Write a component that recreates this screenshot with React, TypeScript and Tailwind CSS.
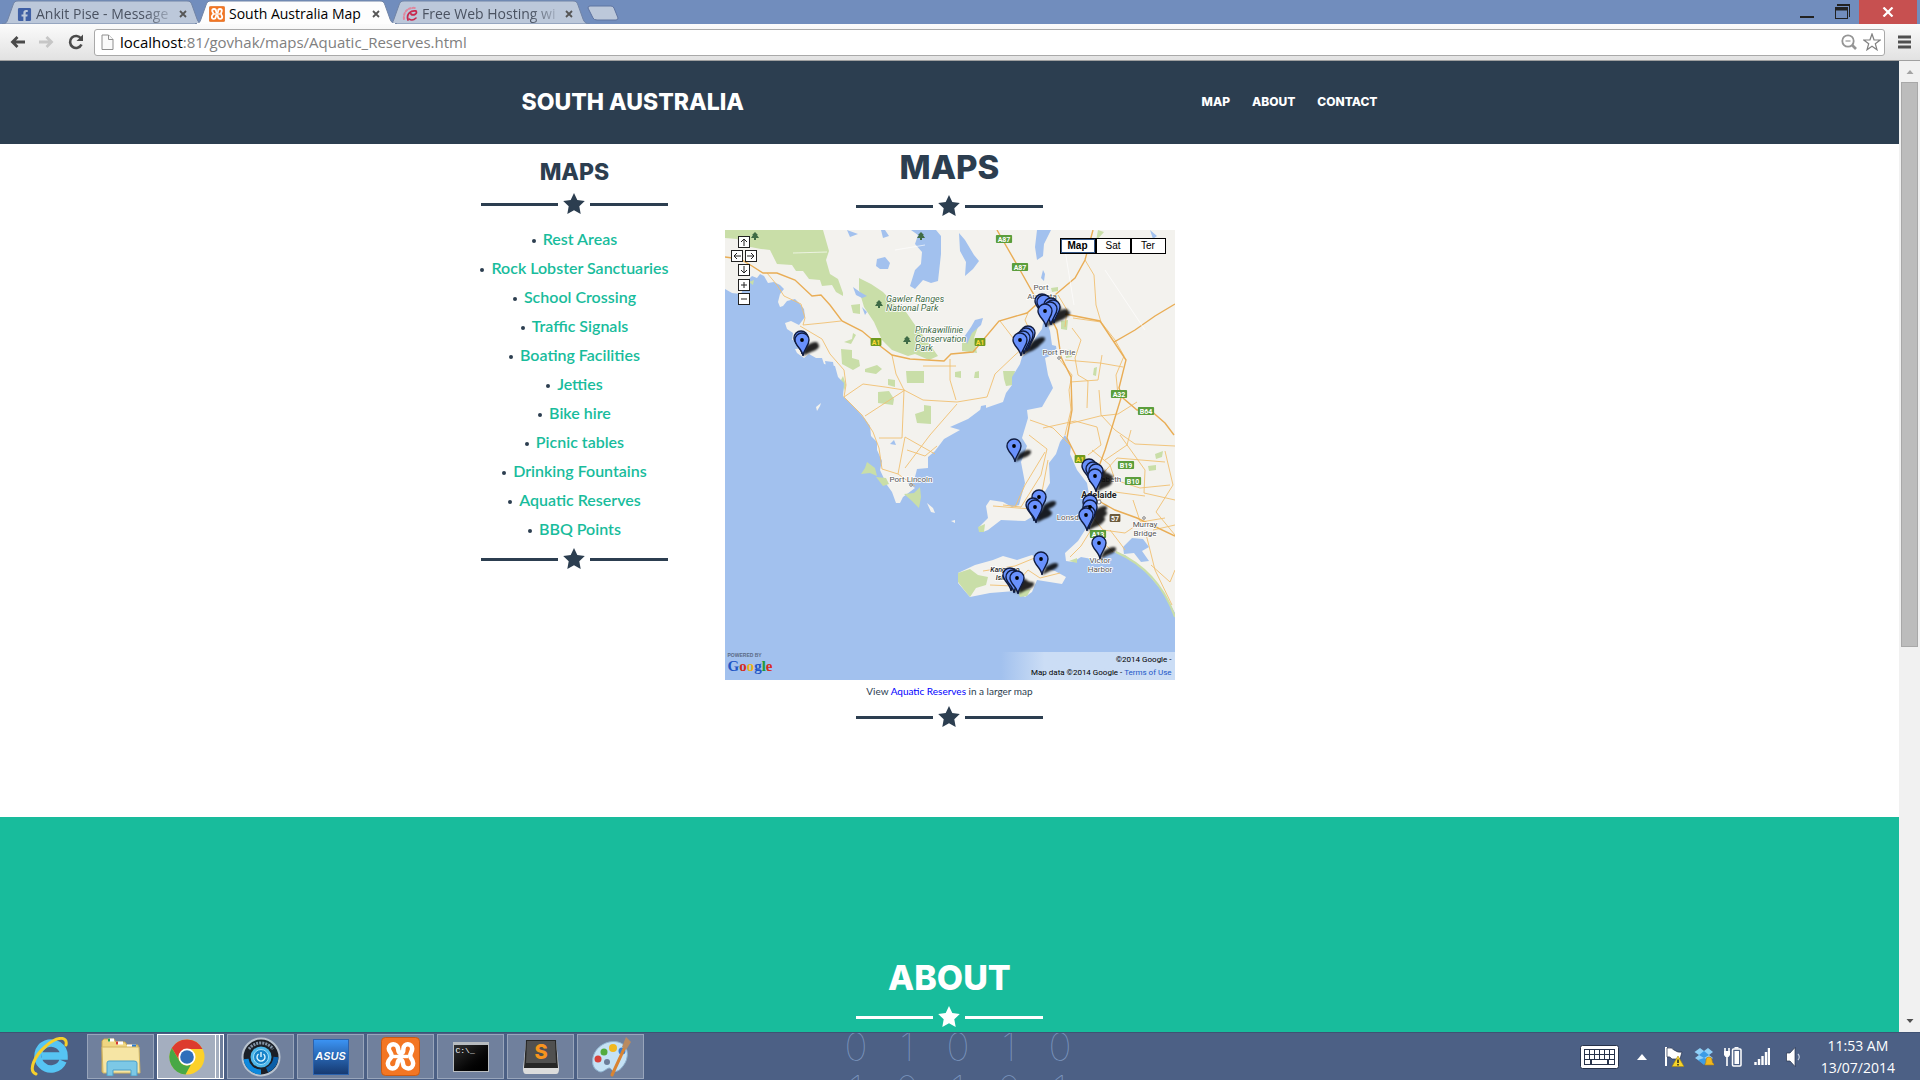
import React from "react";
import { FaFacebookSquare } from "react-icons/fa";

const UI = "font-['Open_Sans','Noto_Sans',sans-serif]";
const HEAD = "font-['Inter',sans-serif] font-extrabold";

const mapLinks = [
  "Rest Areas",
  "Rock Lobster Sanctuaries",
  "School Crossing",
  "Traffic Signals",
  "Boating Facilities",
  "Jetties",
  "Bike hire",
  "Picnic tables",
  "Drinking Fountains",
  "Aquatic Reserves",
  "BBQ Points",
];

function XamppIcon({ size }: { size: number }) {
  return (
    <svg width={size} height={size} viewBox="0 0 40 40">
      <rect x="0.5" y="0.5" width="39" height="39" rx="4" fill="#f37623" stroke="#c85a14" />
      <path
        d="M8 12 C8 6 17 6 17.500 12 C18 18 23 18 23 12 C23 6 32 6 32 12 C32 15 30 16 30 19.500 C30 22 33 23 33 27 C33 34 23 34 22.500 27 C22 22 17.500 22 17 27 C16.500 34 7 34 7 27 C7 23 11 22 11 19.500 C11 16 8 15 8 12 Z"
        fill="none"
        stroke="#fff"
        strokeWidth="4.600"
        strokeLinejoin="round"
      />
      <path d="M12 20 H28" stroke="#fff" strokeWidth="3.500" />
    </svg>
  );
}

function SwirlIcon() {
  return (
    <svg width="16" height="16" viewBox="0 0 16 16" fill="none" strokeLinecap="round">
      <path d="M2 13 C1 6 6 1 13 2" stroke="#e0869d" strokeWidth="2" strokeDasharray="2 2" />
      <path d="M6 14 C4 8 9 4 14 5 C16 8 11 10 9 8" stroke="#c8284f" strokeWidth="1.800" />
      <path d="M7 13 C10 15 12 14 14 12" stroke="#c8284f" strokeWidth="1.600" />
    </svg>
  );
}

type TabProps = { icon: React.ReactNode; title: string; active?: boolean };

function Tab({ icon, title, active }: TabProps) {
  return (
    <div className={active ? "relative z-10 h-6 w-[193px]" : "relative h-6 w-[193px]"}>
      <svg className="absolute inset-y-0 -left-1 h-6 w-[202px]" viewBox="0 0 202 24" aria-hidden="true">
        <path
          d="M0 24 C4 24 5 22 6 19 L11 5 C12 2 13 1 16 1 H185 C188 1 189 2 190 5 L195 19 C196 22 198 24 202 24 Z"
          fill={active ? "#fdfdfd" : "#bcc8da"}
          stroke="#7184a6"
          strokeWidth="1"
        />
        {active && <path d="M2 24 H200" stroke="#fdfdfd" strokeWidth="2" />}
      </svg>
      <div className="relative flex h-full items-center gap-1 pt-1 pl-2.5 pr-2">
        <span className="flex w-4 shrink-0 justify-center">{icon}</span>
        <span
          className={
            active
              ? "flex-1 whitespace-nowrap text-sm leading-5 text-black"
              : "flex-1 whitespace-nowrap text-sm leading-5 text-[#4a5261] [mask-image:linear-gradient(to_right,black_80%,transparent_105%)]"
          }
        >
          {title}
        </span>
        <button aria-label={"Close " + title} className="flex h-4 w-4 items-center justify-center">
          <svg width="8" height="8" viewBox="0 0 8 8">
            <path d="M1 1 L7 7 M7 1 L1 7" stroke="#555" strokeWidth="1.800" />
          </svg>
        </button>
      </div>
    </div>
  );
}

function BrowserChrome() {
  return (
    <header className={UI}>
      <div className="flex h-6 justify-between bg-[#718dbd]">
        <div className="flex pl-1.5">
          <Tab icon={<FaFacebookSquare size={15} color="#4060a5" />} title="Ankit Pise - Message" />
          <Tab icon={<XamppIcon size={16} />} title="South Australia Map" active />
          <Tab icon={<SwirlIcon />} title="Free Web Hosting wi" />
          <button aria-label="New tab" className="ml-0.5">
            <svg width="32" height="24" viewBox="0 0 32 24">
              <path d="M3 6 H24 Q26 6 27 8 L31 18 Q31 20 29 20 H10 Q7 20 6 18 L1 8 Q1 6 3 6 Z" fill="#bcc8da" stroke="#5f74a0" />
            </svg>
          </button>
        </div>
        <div className="flex pr-[3px]">
          <button aria-label="Minimise" className="flex w-9 justify-center">
            <svg width="14" height="24" viewBox="0 0 14 24">
              <path d="M0 17 H14" stroke="#222" strokeWidth="2" />
            </svg>
          </button>
          <button aria-label="Restore" className="flex w-[34px] justify-center">
            <svg width="15" height="24" viewBox="0 0 15 24" fill="none" stroke="#222">
              <path d="M2 4.500 H14.500 V17" />
              <path d="M2 5 H15" strokeWidth="2" />
              <rect x="0.500" y="7.500" width="12" height="11" />
              <path d="M0 9 H13" strokeWidth="3" />
            </svg>
          </button>
          <button aria-label="Close window" className="flex w-[58px] items-center justify-center bg-[#c75050]">
            <svg width="12" height="10" viewBox="0 0 12 10">
              <path d="M1.500 0.500 L10.500 9.500 M10.500 0.500 L1.500 9.500" stroke="#fff" strokeWidth="2.200" />
            </svg>
          </button>
        </div>
      </div>
      <div className="flex h-[37px] items-center border-b border-[#a0a0a0] bg-gradient-to-b from-[#fbfbfb] to-[#e2e2e2] pl-2.5 pr-[9px]">
        <button aria-label="Back" className="w-7">
          <svg width="16" height="12" viewBox="0 0 16 12" fill="none" stroke="#4a4a4a" strokeWidth="2.800">
            <path d="M15 6 H3 M7.500 1 L2.500 6 L7.500 11" />
          </svg>
        </button>
        <button aria-label="Forward" className="w-[30px]">
          <svg width="16" height="12" viewBox="0 0 16 12" fill="none" stroke="#c6c6c6" strokeWidth="2.800">
            <path d="M1 6 H13 M8.500 1 L13.500 6 L8.500 11" />
          </svg>
        </button>
        <button aria-label="Reload" className="w-[26px]">
          <svg width="16" height="16" viewBox="0 0 16 16">
            <path d="M13 4.500 A6 6 0 1 0 13.500 10.500" fill="none" stroke="#4a4a4a" strokeWidth="2.600" />
            <path d="M15 0.500 V7 H8.500 Z" fill="#4a4a4a" />
          </svg>
        </button>
        <div className="flex h-[27px] flex-1 items-center rounded-[3px] border border-[#a9a9a9] bg-white px-1.5">
          <svg width="13" height="17" viewBox="0 0 13 17" fill="#fafafa" stroke="#8e8e8e">
            <path d="M1 1 H7.500 L12 5.500 V15.500 H1 Z" />
            <path d="M7.500 1 V5.500 H12" />
          </svg>
          <a href="#page" className="ml-1.5 flex-1 text-[15px] leading-5 text-[#808080]">
            <span className="text-black">localhost</span>:81/govhak/maps/Aquatic_Reserves.html
          </a>
          <button aria-label="Zoom" className="mr-1.5">
            <svg width="16" height="16" viewBox="0 0 16 16" fill="none" stroke="#959595">
              <circle cx="7" cy="7" r="5.700" strokeWidth="1.800" />
              <path d="M11 11 L15 15" strokeWidth="2.600" />
              <path d="M4.500 7 H9.500" strokeWidth="1.200" />
            </svg>
          </button>
          <button aria-label="Bookmark" className="-mr-[3px]">
            <svg width="18" height="18" viewBox="0 0 18 18">
              <path d="M9 1 L11 6.800 L17.200 7 L12.300 10.700 L14 16.800 L9 13.300 L4 16.800 L5.700 10.700 L0.800 7 L7 6.800 Z" fill="#fff" stroke="#808080" strokeWidth="1.200" />
            </svg>
          </button>
        </div>
        <button aria-label="Menu" className="ml-[13px]">
          <svg width="13" height="14" viewBox="0 0 13 14" stroke="#505050" strokeWidth="3">
            <path d="M0 2 H13 M0 7 H13 M0 12 H13" />
          </svg>
        </button>
      </div>
    </header>
  );
}

function StarDivider({ light }: { light?: boolean }) {
  return (
    <div className={light ? "flex w-[187px] items-center justify-between text-white" : "flex w-[187px] items-center justify-between text-[#2c3e50]"}>
      <span className="h-[3px] w-[77px] bg-current" />
      <svg width="22" height="22" viewBox="0 0 22 22" fill="currentColor">
        <path d="M11 0 L14.300 7 L21.800 8 L16.300 13.300 L17.700 21 L11 17.300 L4.300 21 L5.700 13.300 L0.200 8 L7.700 7 Z" />
      </svg>
      <span className="h-[3px] w-[78px] bg-current" />
    </div>
  );
}

const pins: [number, number][] = [
  [76, 108], [77, 110],
  [317, 71], [319, 72], [326, 75], [328, 77], [325, 79], [320, 81],
  [303, 103], [301, 105], [298, 108], [295, 110],
  [289, 216],
  [364, 236], [368, 239], [371, 241], [370, 246],
  [314, 267], [308, 275], [310, 277],
  [365, 272], [365, 277], [363, 283], [361, 285],
  [374, 313],
  [316, 329],
  [285, 345], [288, 347], [292, 348],
];

const frontPins: [number, number][] = [
  [77, 110], [320, 81], [295, 110], [289, 216], [370, 246], [314, 267], [310, 277], [365, 277], [361, 285], [374, 313], [316, 329], [292, 348],
];

const shields: { x: number; y: number; t: string; c: string }[] = [
  { x: 279, y: 9, t: "A87", c: "#5b9e3c" },
  { x: 295, y: 37, t: "A87", c: "#5b9e3c" },
  { x: 394, y: 164, t: "A32", c: "#5b9e3c" },
  { x: 421, y: 181, t: "B64", c: "#5b9e3c" },
  { x: 401, y: 235, t: "B19", c: "#5b9e3c" },
  { x: 408, y: 251, t: "B10", c: "#5b9e3c" },
  { x: 373, y: 304, t: "A13", c: "#5b9e3c" },
  { x: 151, y: 112, t: "A1", c: "#6f9a1e" },
  { x: 255, y: 112, t: "A1", c: "#6f9a1e" },
  { x: 355, y: 229, t: "A1", c: "#6f9a1e" },
  { x: 390, y: 288, t: "57", c: "#6c5a3c" },
];

const trees: [number, number][] = [[30, 6], [196, 6], [154, 74], [182, 110]];

function MapDrawing() {
  return (
    <svg className="block h-auto w-full" viewBox="0 0 450 450" fontFamily="Roboto, sans-serif">
      <defs>
        <filter id="soft" x="-30%" y="-30%" width="160%" height="160%">
          <feGaussianBlur stdDeviation="1" />
        </filter>
      </defs>
      <rect width="450" height="450" fill="#f3f2ee" />

      <g fill="#c9dea8">
        <path d="M0 0 H98 L104 21 L101 30 L105 44 L113 49 L118 63 V66 L111 62 L107 55 L97 56 L95 50 L84 49 L78 41 H71 L67 35 L52 34 L45 20 L36 19 L20 16 L12 9 L0 8 Z" />
        <path d="M134 48 L146 54 L158 62 L170 75 L181 82 L190 95 L200 108 L213 126 L204 130 L190 124 L183 126 L167 120 L157 110 L149 92 L139 77 L134 60 Z" />
        <path d="M126 75 L135 74 V84 L128 83 Z M116 119 L127 120 V128 L134 130 L135 136 L128 140 L117 134 Z M140 139 L152 135 L157 139 L151 144 L140 142 Z" />
        <path d="M181 141 H199 V153 H182 Z M153 162 L164 161 L169 169 L168 175 L153 173 Z M163 149 L170 150 V157 L163 155 Z M190 184 L199 181 V175 L206 176 V194 L192 193 Z M230 142 L236 141 V148 L230 147 Z" />
        <path d="M118 146 L121 155 L119 161 L116 150 Z M119 112 L127 109 L128 103 L131 105 L126 114 Z" />
        <path d="M237 110 L247 100 L253 97 L249 108 L252 123 L237 121 Z M278 141 L290 141 L288 155 L281 156 L279 149 Z M250 142 L254 141 V148 L249 148 Z M336 91 L343 90 L342 100 L336 99 Z M326 58 L333 57 V61 L327 62 Z" />
        <path d="M369 138 L372 137 L371 146 L368 145 Z M340 121 L346 119 L347 127 L341 128 Z M430 224 L438 221 L437 227 L431 229 Z M423 236 L431 235 V240 L424 241 Z" />
        <path d="M373 0 L379 2 L371 11 Z" />
      </g>

      <path
        fill="#a2c1ee"
        d="M0 59 L7 63 L16 64 L19 57 L23 50 L27 46 L32 48 L35 44 L39 46 L43 53 L49 52 L55 55 L59 59 L55 64 L53 72 L55 77 L58 76 L62 71 L70 69 L74 73 L79 79 L80 87 L74 95 L66 91 L60 93 L62 99 L68 103 L67 110 L74 111 L79 118 L70 119 L72 123 L79 128 L84 124 L91 128 L97 128 L99 134 L110 136 L113 147 L119 153 L118 166 L125 173 L130 178 L140 189 L145 196 L146 206 L152 212 L152 220 L157 231 L155 240 L162 255 L167 262 L171 273 L175 273 L178 267 L190 258 L183 253 L190 247 L192 239 L203 238 V227 L210 221 L219 209 L235 200 L225 197 L243 189 L255 180 L278 172 L281 163 L287 155 L287 147 L295 134 L297 127 L305 120 L311 107 L317 99 L318 93 L322 92 L325 101 L327 115 L331 116 L332 123 L320 128 L323 145 L328 158 L321 170 L317 177 L302 180 L303 188 L297 208 L302 216 L296 232 L300 253 L294 275 L287 277 L278 272 L265 270 L261 276 L263 288 L254 297 L258 302 L263 300 L276 290 L300 291 L310 285 L315 270 L325 253 L324 233 L331 224 L335 212 L340 205 L346 216 L345 224 L352 240 L362 253 L365 270 L362 297 L353 311 L340 323 L341 331 L348 332 L356 327 L372 330 L388 322 L400 325 L422 343 L439 363 L450 383 V450 H0 Z"
      />
      <g fill="#a2c1ee">
        <path d="M186 0 L193 5 L190 14 L197 22 L196 34 L190 40 L185 56 L190 59 L198 50 L206 53 L213 51 L216 24 L216 6 L211 0 Z" />
        <path d="M152 29 L160 27 L165 33 L163 39 L155 39 L151 36 Z M128 57 L135 62 L142 66 L137 68 L131 65 Z M122 0 L133 4 L125 7 Z M234 3 L240 10 L249 25 L254 31 L248 39 L240 46 L241 32 L235 21 Z" />
        <path d="M312 0 H326 L319 14 L318 26 L312 30 L310 17 Z M318 40 L320 44 L319 51 L316 48 Z M250 90 L258 88 L256 95 L247 103 L242 114 L239 107 L246 97 Z" />
        <path d="M398 317 L407 308 L418 309 L424 317 L417 321 L424 331 L416 332 L409 323 L399 324 Z M100 131 L108 132 L109 138 L101 136 Z M256 176 L261 175 V180 L255 181 Z" />
        <path d="M137 77 L142 82 L140 85 Z M156 0 H160 L164 6 L158 8 Z M425 0 L432 6 L428 9 Z M165 214 L169 210 L171 215 Z" />
      </g>
      <path
        fill="#f3f2ee"
        d="M233 343 L250 335 L268 330 L278 326 L292 330 L307 325 L314 329 L316 337 L330 341 L341 347 L337 354 L312 350 L307 362 L300 367 L290 361 L265 363 L245 367 L233 353 Z M92 181 L95 176 L96 173 L91 177 Z M202 273 L208 278 L210 283 L206 282 Z M226 291 L230 290 V293 Z"
      />
      <path
        fill="#c9dea8"
        d="M233 343 L245 339 L253 345 L263 347 L261 355 L251 358 L245 367 L240 361 L233 352 Z M292 360 L306 359 L302 366 L295 367 Z M142 232 L150 238 L152 246 L145 243 L136 244 L140 238 Z M151 247 L161 248 L164 254 L158 256 Z M179 264 L189 263 L195 257 L196 267 L194 278 L187 271 Z M253 297 L260 294 L259 302 L254 302 Z M24 52 L29 50 L28 55 Z M344 331 L352 328 L352 333 Z"
      />
      <path d="M391 322 Q434 341 450 387" fill="none" stroke="#c9dea8" strokeWidth="2" />

      <g fill="none" stroke="#f0c070" strokeWidth="0.900">
        <path d="M42 43 L52 55 L59 66 L76 74 L80 88 L78 95 L98 93 L116 91 M75 96 L97 109 L105 124 L119 140 L121 155 L119 167 L137 185 L148 202 L154 218 L157 239 L173 244 L180 207 L210 224" />
        <path d="M167 125 L171 144 L179 160 L198 170 L232 172 L262 167 L270 144 L290 125 L298 118 M119 167 L138 154 L160 157 L179 160 L177 208 L154 208 M198 136 L231 136 M225 129 V150 L231 170 M180 160 L140 186 M173 244 L190 256 M232 174 L205 205 L180 238 M182 220 L200 226 L212 216" />
        <path d="M275 91 L295 117 M303 83 L300 90 L308 108 M333 65 L342 80 L340 97 M360 30 L369 45 L371 75 L376 92 L390 110 L399 126 L391 145 L393 165 M335 130 L347 145 L344 160 L346 180 L340 205 M347 98 L356 110 L350 128 L353 145 L363 151 L362 178 M340 130 L375 133 L398 137 M348 88 L376 92 M343 194 L375 186 L393 184 L412 172 M305 190 L328 198 L345 215 M318 198 L350 191 L372 197 L376 215 L363 225 M345 152 L373 150 L377 125 M374 160 L376 185 L390 200 L410 214 L450 216 M406 200 L402 215 L380 230" />
        <path d="M304 205 L322 219 L316 245 L296 277 L278 275 M320 222 L300 255 L290 277 M323 230 L317 262 L308 279 L293 278 L268 276 M367 220 L385 235 L390 250 L415 258 L445 255 M395 205 L420 240 L419 263 L450 270 M372 250 L392 228 L440 232 M440 221 L448 255 L431 282 L450 305 M374 270 L390 262 L420 266 M365 284 L378 300 L400 303 L416 292 L440 288 M416 294 L408 270 M366 300 L356 316 L345 327 M370 305 L388 322 M385 300 L395 313 L400 320 M420 300 L430 340 L447 375 M428 300 L450 295 M426 335 L445 352 L450 340 M258 341 L290 336 L312 327 M290 355 L303 340 L315 348 L335 343 M265 355 L288 356" />
      </g>
      <g fill="none" stroke="#e9ad55" strokeWidth="1.400">
        <path d="M0 27 L15 29 L27 36 L38 43 L52 43 L70 50 L87 66 L96 65 L105 75 L117 91 L137 101 L150 112 L167 125 L185 129 L219 131 L226 124 L248 122 L274 91 L302 83 L312 74" />
        <path d="M272 0 L295 40 L313 72 L324 84 L332 100 L336 127 L346 147 L347 180 L342 208 L352 228 M318 72 L330 65 L350 48 L360 30 L368 0 M340 84 L375 91 L389 112 L410 100 L430 86 L450 74 M389 112 L401 130 L394 158 L398 168 L412 180 L425 180 L440 193 L449 205 M396 168 L380 220 L369 250 M372 270 L390 280 L412 288 L450 306" />
      </g>
      <g fill="none" stroke="#fff" strokeWidth="0.800" opacity="0.800">
        <path d="M68 23 L102 22 M340 20 L349 75 M380 40 L420 100 M200 15 L170 20" />
      </g>

      {shields.map((s) => (
        <g key={s.x + "-" + s.y}>
          <rect x={s.x - s.t.length * 2.7} y={s.y - 4} width={s.t.length * 5.4} height="8" rx="1" fill={s.c} />
          <text x={s.x} y={s.y + 3} fontSize="7" fontWeight="700" textAnchor="middle" fill={s.t === "A1" ? "#ffd83a" : "#fff"}>
            {s.t}
          </text>
        </g>
      ))}
      {trees.map(([x, y]) => (
        <path key={x} d={`M${x} ${y - 4} l3 3 h-1 l2 3 h-3 v2 h-2 v-2 h-3 l2 -3 h-1 Z`} fill="#3f6b46" />
      ))}

      <g fontSize="9" fill="#3f6b46" fontStyle="italic" stroke="#fff" strokeWidth="1.500" paintOrder="stroke">
        <text x="161" y="72">Gawler Ranges</text>
        <text x="161" y="81">National Park</text>
        <text x="190" y="103">Pinkawillinie</text>
        <text x="190" y="112">Conservation</text>
        <text x="190" y="121">Park</text>
      </g>
      <g fontSize="8" fill="#555" textAnchor="middle" stroke="#fff" strokeWidth="1.500" paintOrder="stroke">
        <text x="316" y="60">Port</text>
        <text x="317" y="69">Augusta</text>
        <text x="334" y="125">Port Pirie</text>
        <text x="186" y="252">Port Lincoln</text>
        <text x="348" y="290">Lonsdale</text>
        <text x="380" y="252">Elizabeth</text>
        <text x="420" y="297">Murray</text>
        <text x="420" y="306">Bridge</text>
        <text x="375" y="333">Victor</text>
        <text x="375" y="342">Harbor</text>
        <text x="374" y="268" fontSize="9" fontWeight="700" fill="#222">Adelaide</text>
        <text x="280" y="342" fontSize="7" fontWeight="500" fontStyle="italic" fill="#222">Kangaroo</text>
        <text x="280" y="350" fontSize="7" fontWeight="500" fontStyle="italic" fill="#222">Island</text>
      </g>
      <g fill="#fff" stroke="#666" strokeWidth="0.800">
        <circle cx="334" cy="128" r="1.300" />
        <circle cx="186" cy="255" r="1.300" />
        <circle cx="419" cy="288" r="1.300" />
        <circle cx="374" cy="272" r="2" />
      </g>

      <g filter="url(#soft)" opacity="0.850">
        {pins.map(([x, y]) => (
          <path key={x + "s" + y} d={`M${x + 1} ${y + 16} L${x + 5} ${y + 8} Q${x + 14} ${y + 2} ${x + 17} ${y + 5} Q${x + 18} ${y + 9} ${x + 9} ${y + 12} Z`} />
        ))}
      </g>
      {pins.map(([x, y]) => (
        <path
          key={x + "p" + y}
          d={`M${x + 1} ${y + 16} C${x + 0.5} ${y + 9} ${x - 7} ${y + 6} ${x - 7} ${y} A7 7 0 1 1 ${x + 7} ${y} C${x + 7} ${y + 6} ${x + 1.5} ${y + 9} ${x + 1} ${y + 16} Z`}
          fill="#6991fd"
          stroke="#101c40"
          strokeWidth="1.400"
        />
      ))}
      {frontPins.map(([x, y]) => (
        <circle key={x + "d" + y} cx={x} cy={y} r="1.900" fill="#000" />
      ))}
    </svg>
  );
}

function MapButton({ label, d, className }: { label: string; d: string; className: string }) {
  return (
    <button aria-label={label} className={"absolute flex h-3 w-3 items-center justify-center border border-[#222] bg-white " + className}>
      <svg width="8" height="8" viewBox="0 0 8 8" fill="none" stroke="#222">
        <path d={d} />
      </svg>
    </button>
  );
}

function MapWidget() {
  return (
    <div className="relative w-full font-['Liberation_Sans',sans-serif]">
      <MapDrawing />
      <MapButton label="Pan up" className="left-[13px] top-1.5" d="M4 8 V1 M1 4 L4 1 L7 4" />
      <MapButton label="Pan left" className="left-1.5 top-5" d="M8 4 H1 M4 1 L1 4 L4 7" />
      <MapButton label="Pan right" className="left-5 top-5" d="M0 4 H7 M4 1 L7 4 L4 7" />
      <MapButton label="Pan down" className="left-[13px] top-[34px]" d="M4 0 V7 M1 4 L4 7 L7 4" />
      <MapButton label="Zoom in" className="left-[13px] top-[49px]" d="M1 4 H7 M4 1 V7" />
      <MapButton label="Zoom out" className="left-[13px] top-[63px]" d="M1 4 H7" />
      <div className="absolute right-[9px] top-2 flex h-4 border border-black bg-white text-[10px] leading-[14px] text-black">
        <button className="w-[34px] border border-[#345684] font-bold leading-3">Map</button>
        <button className="w-[35px] border-l-2 border-black">Sat</button>
        <button className="w-[35px] border-l-2 border-black">Ter</button>
      </div>
      <div className="absolute bottom-0 right-0 flex h-7 w-[174px] flex-col items-end justify-between bg-gradient-to-r from-transparent to-[#cbddf5] to-25% px-[3px] pt-0.5 pb-px font-['Roboto',sans-serif] text-[8px] leading-3 text-black">
        <span>©2014 Google -</span>
        <span>
          Map data ©2014 Google - <a href="#terms" className="text-[#1a56c8]">Terms of Use</a>
        </span>
      </div>
      <div className="absolute bottom-1.5 left-[3px] flex flex-col">
        <span className="text-[5px] font-bold leading-[6px] text-[#5b6b85]">POWERED BY</span>
        <span className="font-['Liberation_Serif',serif] text-[15px] font-bold leading-4">
          <span className="text-[#1f55c5]">G</span>
          <span className="text-[#d62d20]">o</span>
          <span className="text-[#eeb211]">o</span>
          <span className="text-[#1f55c5]">g</span>
          <span className="text-[#1c9a38]">l</span>
          <span className="text-[#d62d20]">e</span>
        </span>
      </div>
    </div>
  );
}

function Page() {
  return (
    <main id="page" className="flex min-w-0 flex-1 flex-col overflow-hidden bg-white font-['Lato',sans-serif] text-[#2c3e50]">
      <div className="h-[83px] shrink-0 bg-[#2c3e50]">
        <div className={HEAD + " mx-auto flex h-full max-w-[878px] items-center justify-between px-[11px] pb-0.5 text-white"}>
          <a href="#top" className="text-[23px] leading-8">SOUTH AUSTRALIA</a>
          <nav className="flex gap-[22px] text-xs leading-4">
            <a href="#map">MAP</a>
            <a href="#about">ABOUT</a>
            <a href="#contact">CONTACT</a>
          </nav>
        </div>
      </div>
      <section className="grid h-[673px] shrink-0 grid-cols-[1fr_450px_1fr]">
        <aside className="mr-14 flex flex-col items-center justify-self-end pt-3">
          <h3 className={HEAD + " text-[23px] leading-8"}>MAPS</h3>
          <div className="mt-[5px]">
            <StarDivider />
          </div>
          <ul className="mb-[5px] mt-[9px] whitespace-nowrap text-base font-semibold leading-[29px] text-[#18bc9c]">
            {mapLinks.map((name) => (
              <li key={name} className="flex items-center justify-center gap-[7px]">
                <span className="mt-1 h-1 w-1 rounded-full bg-[#2c3e50]" />
                <a href="#map">{name}</a>
              </li>
            ))}
          </ul>
          <StarDivider />
        </aside>
        <div id="map" className="flex flex-col items-center pt-[3px]">
          <h2 className={HEAD + " text-[33px] leading-10"}>MAPS</h2>
          <div className="mb-[13px] mt-2">
            <StarDivider />
          </div>
          <MapWidget />
          <p className="mb-[7px] mt-[3px] text-[10px] leading-4">
            View <a href="#larger" className="text-[#0000ff]">Aquatic Reserves</a> in a larger map
          </p>
          <StarDivider />
        </div>
      </section>
      <section id="about" className="flex flex-1 flex-col items-center bg-[#18bc9c] pt-[141px] text-white">
        <h2 className={HEAD + " text-[34px] leading-10"}>ABOUT</h2>
        <div className="mt-2">
          <StarDivider light />
        </div>
      </section>
    </main>
  );
}

function Scrollbar() {
  return (
    <div className="flex w-[21px] shrink-0 flex-col items-center bg-[#f1f1f1]">
      <svg width="8" height="21" viewBox="0 0 8 21">
        <path d="M0.500 13 L4 9 L7.500 13 Z" fill="#a3a3a3" />
      </svg>
      <div className="h-[565px] w-[17px] border border-[#a8a8a8] bg-[#bcbcbc]" />
      <div className="flex-1" />
      <svg width="8" height="21" viewBox="0 0 8 21">
        <path d="M0.500 8 L4 12 L7.500 8 Z" fill="#505050" />
      </svg>
    </div>
  );
}

const taskIcons: { name: string; icon: React.ReactNode }[] = [
  {
    name: "Instant On",
    icon: (
      <svg width="40" height="40" viewBox="0 0 40 40">
        <circle cx="20" cy="20" r="18.500" fill="#1b1f26" stroke="#b9c3cf" strokeWidth="2" />
        <path d="M5 22 A15 15 0 0 0 20 35" fill="none" stroke="#0e88dc" strokeWidth="5" />
        <path d="M35 20 A15 15 0 0 1 26 33" fill="none" stroke="#0b5fa8" strokeWidth="5" />
        <path d="M8 12 A15 15 0 0 1 32 12" fill="none" stroke="#8292a4" strokeWidth="3" strokeDasharray="2 1" />
        <circle cx="20" cy="20" r="10.500" fill="#4db7ea" />
        <circle cx="20" cy="20" r="7.500" fill="#1683c9" stroke="#9fdcf7" />
        <path d="M17.500 17 A4 4 0 1 0 22.500 17 M20 15 V20" fill="none" stroke="#dff6ff" strokeWidth="1.400" />
      </svg>
    ),
  },
  {
    name: "ASUS",
    icon: (
      <span className="flex h-9 w-9 items-center justify-center border border-[#2b62ad] bg-gradient-to-b from-[#3b93f3] to-[#163a72] font-['Inter',sans-serif] text-[11px] font-semibold italic text-white">
        ASUS
      </span>
    ),
  },
  { name: "XAMPP", icon: <XamppIcon size={39} /> },
  {
    name: "Command Prompt",
    icon: (
      <span className="h-[30px] w-9 border border-t-[3px] border-[#b8bcc0] bg-gradient-to-br from-[#333] to-black pl-0.5 text-left font-['Liberation_Mono',monospace] text-[8px] leading-3 text-white">
        C:\_
      </span>
    ),
  },
  {
    name: "Sublime Text",
    icon: (
      <svg width="40" height="36" viewBox="0 0 40 36">
        <path d="M5 2 H35 L38 30 Q38 35 35 35 H5 Q2 35 2 30 Z" fill="#dcdcdc" />
        <path d="M5 1 H35 L37 29 H3 Z" fill="#262626" />
        <path d="M6 2 H34 L35 24 H5 Z" fill="#505050" />
        <text x="20" y="20" fontFamily="Inter, sans-serif" fontSize="20" fontWeight="800" textAnchor="middle" fill="#f7941e">S</text>
      </svg>
    ),
  },
  {
    name: "Paint",
    icon: (
      <svg width="42" height="40" viewBox="0 0 42 40">
        <path d="M3 28 C0 14 14 2 28 5 C40 8 39 22 33 29 C29 35 24 36 21 32 C18 28 13 38 8 34 Q4 32 3 28 Z" fill="#c5e2f5" stroke="#8fb2cf" />
        <circle cx="8" cy="22" r="3.500" fill="#d8413a" />
        <circle cx="14" cy="15" r="3.500" fill="#54ab3e" />
        <circle cx="23" cy="11" r="4" fill="#f0b81f" />
        <circle cx="32" cy="14" r="3.500" fill="#3b7fd0" />
        <circle cx="17" cy="25" r="3" fill="#6b7d99" />
        <path d="M34 12 L22 38" stroke="#d98432" strokeWidth="3" strokeLinecap="round" />
        <path d="M32 10 L36 0 L41 5 L36 13 Z" fill="#b98a60" />
      </svg>
    ),
  },
];

function Taskbar() {
  return (
    <footer className={UI + " grid h-12 shrink-0 grid-cols-[1fr_255px_1fr] border-t border-[#3f5274] bg-[#4c6085] text-white"}>
      <div className="flex gap-[3px] py-px">
        <button aria-label="Internet Explorer" className="flex w-[84px] items-center justify-center pl-4">
          <svg width="40" height="40" viewBox="0 0 40 40" fill="none">
            <path d="M33 24 A13 13 0 1 1 34 19 H12" stroke="#56c4f3" strokeWidth="7.500" />
            <path d="M6 37 C-2 34 4 19 16 9 C27 -1 38 -1 36 8" stroke="#f6cf2b" strokeWidth="3" strokeLinecap="round" />
          </svg>
        </button>
        <button aria-label="File Explorer" className="flex w-[67px] items-center justify-center border border-[#98a5bb] bg-[#70809d]">
          <svg width="40" height="38" viewBox="0 0 40 38">
            <path d="M3 1 H13 L15 4 H24 L26 7 H37 V34 H1 V3 Z" fill="#f0d681" stroke="#c9a750" />
            <path d="M7 2 H13 M15 5 H22 M26 8 H35" stroke="#fff" strokeWidth="3" />
            <path d="M7 2 H9" stroke="#2da14a" strokeWidth="3" />
            <path d="M15 5 H17" stroke="#d63a2f" strokeWidth="3" />
            <path d="M31 8 H35" stroke="#2d7bd0" strokeWidth="3" />
            <path d="M1 9 H38 L39 35 H2 Z" fill="#f6e5a4" stroke="#d3b661" />
            <path d="M6 38 V25 Q6 23 8 23 H33 Q36 23 36 25 V38 H30 V32 H12 V38 Z" fill="#7cc8e6" stroke="#4b9fca" />
          </svg>
        </button>
        <div className="flex w-[67px]">
          <button aria-label="Google Chrome" className="flex flex-1 items-center justify-center border border-white bg-[#a4aebf]">
            <svg width="36" height="36" viewBox="0 0 36 36">
              <circle cx="18" cy="18" r="17.500" fill="#fcd12a" />
              <path d="M2.800 9 A17.500 17.500 0 0 1 33.500 10 H18 A8.500 8.500 0 0 0 10 21 Z" fill="#dd3b2e" />
              <path d="M2.800 9 L10.500 22 A8.500 8.500 0 0 0 22 25.500 L16.500 35.500 A17.500 17.500 0 0 1 2.800 9 Z" fill="#48a845" />
              <circle cx="18" cy="18" r="8.500" fill="#fff" />
              <circle cx="18" cy="18" r="6.800" fill="#2f6fba" />
            </svg>
          </button>
          <span className="w-1 border-y border-r border-white bg-[#a4aebf]" />
          <span className="w-1 border-y border-r border-white bg-[#70809d]" />
        </div>
        {taskIcons.map((t) => (
          <button key={t.name} aria-label={t.name} className="flex w-[67px] items-center justify-center border border-[#98a5bb] bg-[#70809d]">
            {t.icon}
          </button>
        ))}
      </div>
      <div aria-hidden="true" className="-ml-0.5 mr-0.5 grid h-[47px] grid-cols-5 content-start overflow-hidden text-center font-['Inter',sans-serif] text-[39px] font-thin leading-[27px] text-[#7b95bd]">
        {"0101010101".split("").map((digit, i) => (
          <span key={i} className="h-[43px]">{digit}</span>
        ))}
      </div>
      <div className="flex items-center justify-end pr-[25px]">
        <button aria-label="Touch keyboard" className="mr-[18px]">
          <svg width="39" height="24" viewBox="0 0 39 24">
            <rect x="0.500" y="0.500" width="38" height="23" rx="2" fill="#fff" stroke="#26324a" />
            <rect x="4" y="4" width="31" height="16" fill="#26324a" />
            <path d="M5 7 H34 M5 12 H34" stroke="#fff" strokeWidth="4" strokeDasharray="4 1" />
            <path d="M5 17 H10 M12 17 H27 M29 17 H34" stroke="#fff" strokeWidth="4" />
          </svg>
        </button>
        <button aria-label="Show hidden icons" className="mr-[17px]">
          <svg width="10" height="6" viewBox="0 0 10 6">
            <path d="M0 6 L5 0 L10 6 Z" fill="#fff" />
          </svg>
        </button>
        <button aria-label="Action Center" className="mr-2.5">
          <svg width="20" height="20" viewBox="0 0 20 20">
            <path d="M2 0 V19" stroke="#fff" strokeWidth="2" />
            <path d="M3 1 Q8 0 10 3 Q14 6 18 5 L16 12 H8 Q6 9 3 10 Z" fill="#fff" stroke="#26324a" strokeWidth="0.700" />
            <path d="M14 9 L20 19.500 H8 Z" fill="#f7d42a" stroke="#a78710" strokeWidth="0.600" />
            <path d="M14 12.500 V16 M14 17 V18.500" stroke="#222" strokeWidth="1.500" />
          </svg>
        </button>
        <button aria-label="Dropbox" className="mr-2.5">
          <svg width="20" height="20" viewBox="0 0 20 20">
            <path d="M6 1 L10 4 L14 1 L19 5 L15 8 L19 11 L10 17 L1 11 L5 8 L0.500 5 Z" fill="#8fd0f8" />
            <path d="M10 4 L15 8 L10 11 L5 8 Z M4 13 L10 11 L16 13 L10 18 Z" fill="#3b9ce6" />
            <path d="M11 17 Q12 16 12 13 Q12 10 15 10 Q18 10 18 13 Q18 16 20 17 V18 H11 Z" fill="#f0b81f" stroke="#b57f0d" strokeWidth="0.600" />
          </svg>
        </button>
        <button aria-label="Battery" className="mr-3">
          <svg width="18" height="20" viewBox="0 0 18 20">
            <path d="M1 1 V4 M5 1 V4 M3 9 V19" stroke="#fff" strokeWidth="1.600" />
            <path d="M0 4 H6 V8 L4.500 10 H1.500 L0 8 Z" fill="#fff" />
            <rect x="8.500" y="2" width="8.500" height="17" rx="1" fill="none" stroke="#fff" strokeWidth="1.500" />
            <path d="M10.500 0.800 H14.500" stroke="#fff" strokeWidth="1.500" />
            <rect x="10.500" y="4" width="4.500" height="13" fill="#fff" />
          </svg>
        </button>
        <button aria-label="Network" className="mr-4">
          <svg width="16" height="17" viewBox="0 0 16 17" stroke="#fff" strokeWidth="2.400">
            <path d="M1.500 17 V14 M5 17 V11 M8.500 17 V8 M12 17 V4 M15 17 V0" />
          </svg>
        </button>
        <button aria-label="Volume" className="mr-[18px]">
          <svg width="17" height="20" viewBox="0 0 17 20">
            <path d="M0.500 6 H4 L9 0.500 V19.500 L4 14 H0.500 Z" fill="#fff" stroke="#26324a" strokeWidth="0.700" />
            <path d="M12 7 Q14.500 10 12 13" fill="none" stroke="#c4cfe0" strokeWidth="1.200" />
          </svg>
        </button>
        <div className="text-center text-[14px] leading-[22px]">
          <div>11:53 AM</div>
          <div>13/07/2014</div>
        </div>
      </div>
    </footer>
  );
}

export default function App() {
  return (
    <div className="flex h-screen w-full flex-col overflow-hidden">
      <BrowserChrome />
      <div className="flex min-h-0 flex-1">
        <Page />
        <Scrollbar />
      </div>
      <Taskbar />
    </div>
  );
}
